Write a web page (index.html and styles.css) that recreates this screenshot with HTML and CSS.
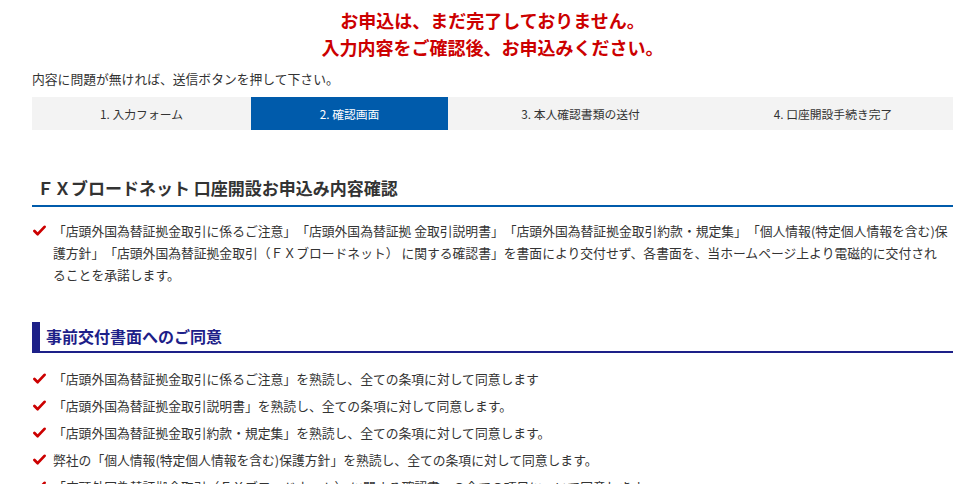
FILE: index.html
```html
<!DOCTYPE html>
<html lang="ja">
<head>
  <meta charset="UTF-8" />
  <meta name="viewport" content="width=device-width, initial-scale=1" />
  <title>口座開設お申込み内容確認</title>
  <link rel="stylesheet" href="styles.css">
</head>
<body>

<div class="wrap">
  <p class="notice">お申込は、まだ完了しておりません。<br>入力内容をご確認後、お申込みください。</p>
  <p class="lead">内容に問題が無ければ、送信ボタンを押して下さい。</p>

  <ol class="steps">
    <li>1. 入力フォーム</li>
    <li class="current">2. 確認画面</li>
    <li>3. 本人確認書類の送付</li>
    <li>4. 口座開設手続き完了</li>
  </ol>

  <h2 class="page-title">ＦＸブロードネット 口座開設お申込み内容確認</h2>

  <ul class="checks checks-wide">
    <li><svg class="tick" viewBox="0 0 14 12"><polyline points="1.5,6.5 5,10 12.5,2" /></svg><span>「店頭外国為替証拠金取引に係るご注意」「店頭外国為替証拠 金取引説明書」「店頭外国為替証拠金取引約款・規定集」「個人情報(特定個人情報を含む)保護方針」「店頭外国為替証拠金取引（ＦＸブロードネット） に関する確認書」を書面により交付せず、各書面を、当ホームページ上より電磁的に交付され<span class="nobr">るこ</span>とを承諾します。</span></li>
  </ul>

  <h3 class="sub-title">事前交付書面へのご同意</h3>

  <ul class="checks">
    <li><svg class="tick" viewBox="0 0 14 12"><polyline points="1.5,6.5 5,10 12.5,2" /></svg><span>「店頭外国為替証拠金取引に係るご注意」を熟読し、全ての条項に対して同意します</span></li>
    <li><svg class="tick" viewBox="0 0 14 12"><polyline points="1.5,6.5 5,10 12.5,2" /></svg><span>「店頭外国為替証拠金取引説明書」を熟読し、全ての条項に対して同意します。</span></li>
    <li><svg class="tick" viewBox="0 0 14 12"><polyline points="1.5,6.5 5,10 12.5,2" /></svg><span>「店頭外国為替証拠金取引約款・規定集」を熟読し、全ての条項に対して同意します。</span></li>
    <li><svg class="tick" viewBox="0 0 14 12"><polyline points="1.5,6.5 5,10 12.5,2" /></svg><span>弊社の「個人情報(特定個人情報を含む)保護方針」を熟読し、全ての条項に対して同意します。</span></li>
    <li><svg class="tick" viewBox="0 0 14 12"><polyline points="1.5,6.5 5,10 12.5,2" /></svg><span>「店頭外国為替証拠金取引（ＦＸブロードネット） に関する確認書」の全ての項目について同意します。</span></li>
  </ul>
</div>

</body>
</html>
```

FILE: styles.css
```css
body {
  margin: 0;
  padding: 0;
  background: #fff;
  color: #333;
  font-family: "Noto Sans CJK JP", "Noto Sans", sans-serif;
  font-size: 12.8px;
  text-spacing-trim: space-all;
}
.wrap {
  width: 921px;
  margin-left: 32px;
}
.notice {
  margin: 0;
  padding-top: 7px;
  text-align: center;
  color: #cc0000;
  font-size: 18px;
  font-weight: bold;
  line-height: 27px;
}
.lead {
  margin: 8px 0 0;
  line-height: 20px;
}
.steps {
  display: grid;
  grid-template-columns: 219px 197px 265px 240px;
  margin: 8px 0 0;
  padding: 0;
  list-style: none;
  background: #f3f3f3;
}
.steps li {
  height: 33px;
  line-height: 33px;
  text-align: center;
  font-size: 11.8px;
  color: #333;
}
.steps li.current {
  background: #005bab;
  color: #fff;
}
.page-title {
  margin: 46px 0 0;
  padding: 0 0 5px 5px;
  font-size: 17px;
  line-height: 24px;
  color: #333;
  border-bottom: 2px solid #005bab;
}
.checks {
  margin: 13px 0 0;
  padding: 0;
  list-style: none;
}
.checks li {
  display: flex;
  align-items: flex-start;
  line-height: 20px;
  margin-bottom: 7px;
}
.checks-wide li {
  line-height: 22px;
}
.nobr {
  white-space: nowrap;
}
.tick {
  flex: none;
  width: 13px;
  height: 11px;
  margin: 4px 7px 0 1px;
  fill: none;
  stroke: #cc0000;
  stroke-width: 3;
  stroke-linecap: round;
  stroke-linejoin: round;
}
.checks-wide .tick {
  margin-top: 5px;
}
.sub-title {
  margin: 36px 0 0;
  padding-left: 6px;
  font-size: 16px;
  line-height: 29px;
  color: #1d2088;
  border-left: 8px solid #1d2088;
  border-bottom: 2px solid #1d2088;
}
.sub-title + .checks {
  margin-top: 16px;
}
```
